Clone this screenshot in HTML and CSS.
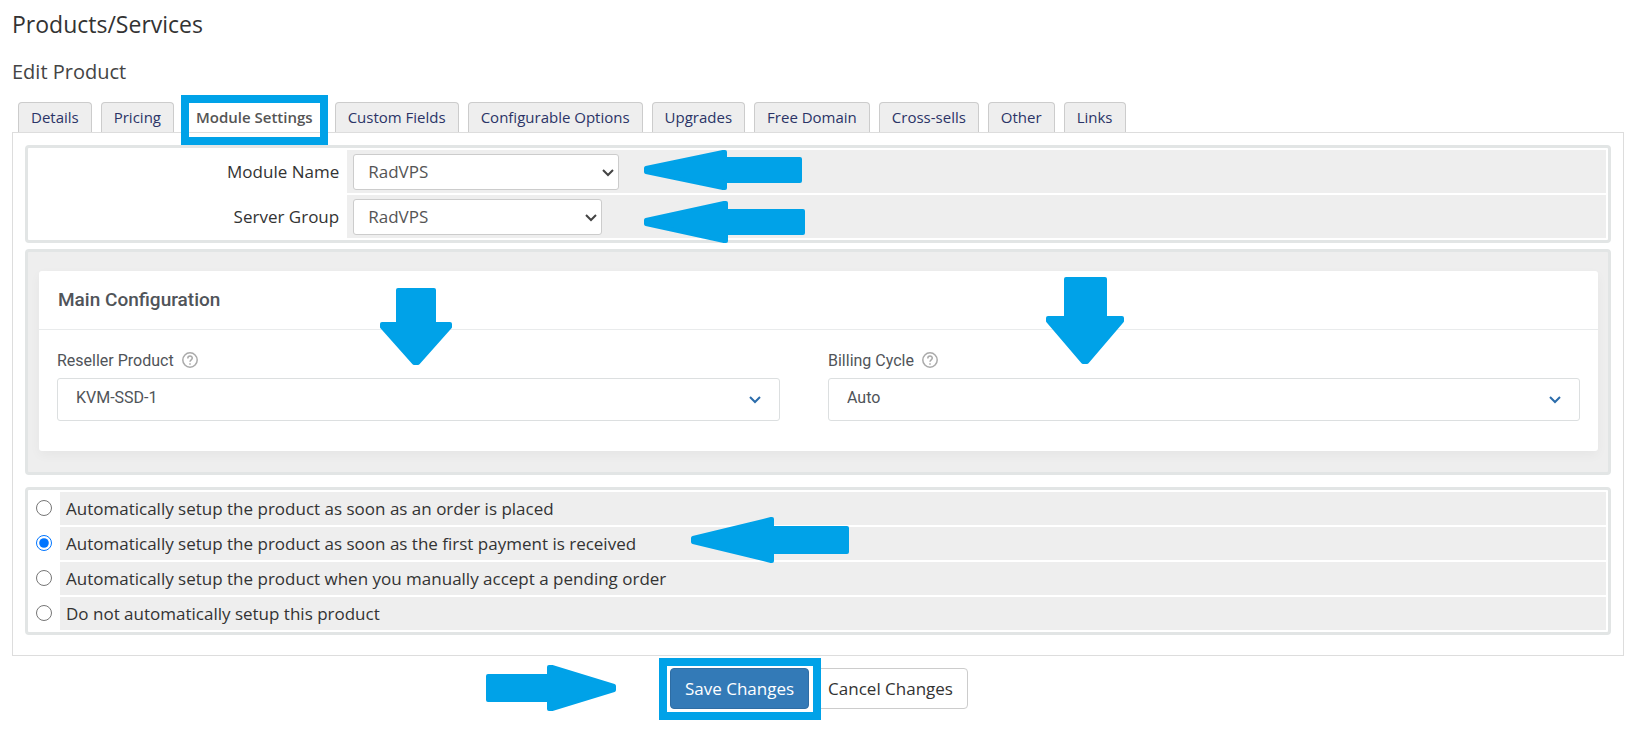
FILE: index.html
```html
<!DOCTYPE html>
<html lang="en">
<head>
  <meta charset="UTF-8">
  <meta name="viewport" content="width=device-width, initial-scale=1.0">
  <title>Products/Services - Edit Product</title>
  <link rel="stylesheet" href="styles.css">
</head>
<body>
  <h1>Products/Services</h1>
  <h2>Edit Product</h2>

  <form class="product-form">
    <nav class="tabs">
      <a href="#details">Details</a>
      <a href="#pricing">Pricing</a>
      <a href="#module" class="active">Module Settings<span class="frame"></span></a>
      <a href="#custom">Custom Fields</a>
      <a href="#options">Configurable Options</a>
      <a href="#upgrades">Upgrades</a>
      <a href="#domain">Free Domain</a>
      <a href="#cross">Cross-sells</a>
      <a href="#other">Other</a>
      <a href="#links">Links</a>
    </nav>

    <div class="tab-content">
      <section class="box module-box">
        <div class="row">
          <label for="moduleName">Module Name</label>
          <div class="field">
            <span class="select module-select">
              <select id="moduleName"><option>RadVPS</option></select>
              <svg width="12" height="8" viewBox="0 0 12 8"><path d="M1 1l5 5 5-5"/></svg>
            </span>
          </div>
        </div>
        <div class="row">
          <label for="serverGroup">Server Group</label>
          <div class="field">
            <span class="select group-select">
              <select id="serverGroup"><option>RadVPS</option></select>
              <svg width="12" height="8" viewBox="0 0 12 8"><path d="M1 1l5 5 5-5"/></svg>
            </span>
          </div>
        </div>
        <svg class="arrow arrow-name" width="158" height="40" viewBox="0 0 158 40"><path d="M2 18L79 2H81V9H156V31H81V38H79L2 22Z"/></svg>
        <svg class="arrow arrow-group" width="161" height="42" viewBox="0 0 161 42"><path d="M2 19L80 2H82V10H159V32H82V40H80L2 23Z"/></svg>
      </section>

      <section class="box config-box">
        <div class="card">
          <h3>Main Configuration</h3>
          <div class="card-body">
            <div class="config">
              <div class="config-label">
                <label for="resellerProduct">Reseller Product</label>
                <svg class="help" width="16" height="16" viewBox="0 0 16 16"><circle cx="8" cy="8" r="7.2"/><path d="M5.8 6.4C5.8 3.3 10.3 3.4 10.3 6.1C10.3 7.8 8 7.9 8 9.7M8 11.2V12.7"/></svg>
              </div>
              <span class="select config-select">
                <select id="resellerProduct"><option>KVM-SSD-1</option></select>
                <svg width="12" height="8" viewBox="0 0 12 8"><path d="M1 1l5 5 5-5"/></svg>
              </span>
            </div>
            <div class="config">
              <div class="config-label">
                <label for="billingCycle">Billing Cycle</label>
                <svg class="help" width="16" height="16" viewBox="0 0 16 16"><circle cx="8" cy="8" r="7.2"/><path d="M5.8 6.4C5.8 3.3 10.3 3.4 10.3 6.1C10.3 7.8 8 7.9 8 9.7M8 11.2V12.7"/></svg>
              </div>
              <span class="select config-select">
                <select id="billingCycle"><option>Auto</option></select>
                <svg width="12" height="8" viewBox="0 0 12 8"><path d="M1 1l5 5 5-5"/></svg>
              </span>
            </div>
          </div>
        </div>
        <svg class="arrow arrow-reseller" width="72" height="77" viewBox="0 0 72 77"><path d="M18 2H54V36H70V39L38 75H34L2 39V36H18Z"/></svg>
        <svg class="arrow arrow-billing" width="78" height="87" viewBox="0 0 78 87"><path d="M20 2H59V41H76V44L41 85H37L2 44V41H20Z"/></svg>
      </section>

      <section class="box setup-box">
        <div class="option">
          <input type="radio" name="autosetup" id="setupOrder">
          <label for="setupOrder">Automatically setup the product as soon as an order is placed</label>
        </div>
        <div class="option">
          <input type="radio" name="autosetup" id="setupPayment" checked>
          <label for="setupPayment">Automatically setup the product as soon as the first payment is received</label>
        </div>
        <div class="option">
          <input type="radio" name="autosetup" id="setupManual">
          <label for="setupManual">Automatically setup the product when you manually accept a pending order</label>
        </div>
        <div class="option">
          <input type="radio" name="autosetup" id="setupOff">
          <label for="setupOff">Do not automatically setup this product</label>
        </div>
        <svg class="arrow arrow-setup" width="158" height="46" viewBox="0 0 158 46"><path d="M2 21L80 2H81V11H156V35H81V44H80L2 25Z"/></svg>
      </section>
    </div>

    <div class="buttons">
      <svg class="arrow-save" width="130" height="46" viewBox="0 0 130 46"><path d="M2 11H63V2H66L128 21V25L66 44H63V35H2Z"/></svg>
      <button type="submit" class="btn btn-primary">Save Changes<span class="frame"></span></button>
      <button type="reset" class="btn">Cancel Changes</button>
    </div>
  </form>
</body>
</html>
```
FILE: styles.css
```css
* {
  box-sizing: border-box;
}

body {
  margin: 0;
  padding: 8px 14px 18px 12px;
  font-family: "Open Sans", sans-serif;
  font-size: 17px;
  color: #333;
  background-color: #fff;
}

h1 {
  margin: 0 0 16px;
  font-size: 23px;
  font-weight: 400;
  line-height: 32px;
}

h2 {
  margin: 0 0 14px;
  font-size: 20px;
  font-weight: 400;
  line-height: 32px;
  color: #444;
}

/* tabs */
.tabs {
  display: flex;
  gap: 9px;
  padding-left: 6px;
}

.tabs a {
  position: relative;
  height: 30px;
  padding: 0 12px;
  border: 1px solid #ccc;
  border-bottom: 0;
  border-radius: 4px 4px 0 0;
  background-color: #eee;
  color: #2b3467;
  font-size: 15px;
  line-height: 29px;
  text-decoration: none;
  white-space: nowrap;
}

.tabs .active {
  border-color: #fff;
  background-color: #fff;
  color: #555;
  font-weight: 600;
}

.frame {
  position: absolute;
  border: 8px solid #00a2e8;
  pointer-events: none;
}

.tabs .frame {
  inset: -8px -3px -13px;
}

.tab-content {
  padding: 12px 12px 20px;
  border: 1px solid #ddd;
}

/* boxes */
.box {
  position: relative;
  padding: 2px;
  border: 3px solid #e2e5e5;
  border-radius: 4px;
}

.module-box,
.setup-box {
  display: flex;
  flex-direction: column;
  gap: 2px;
}

.row {
  display: grid;
  grid-template-columns: 20% 1fr;
  gap: 2px;
}

.row label {
  padding-right: 6px;
  line-height: 43px;
  text-align: right;
}

.field {
  display: flex;
  align-items: center;
  height: 43px;
  padding: 0 6px;
  background-color: #eee;
}

.select {
  position: relative;
  display: block;
}

.select select {
  width: 100%;
  height: 36px;
  padding: 0 14px;
  border: 1px solid #ccc;
  border-radius: 3px;
  background-color: #fff;
  color: #555;
  font-family: inherit;
  font-size: 17px;
  appearance: none;
}

.select svg {
  position: absolute;
  top: 50%;
  right: 5px;
  margin-top: -3px;
  fill: none;
  stroke: #444;
  stroke-width: 2;
  pointer-events: none;
}

.module-select {
  width: 266px;
}

.group-select {
  width: 249px;
}

/* main configuration */
.config-box {
  margin: 6px 0 12px;
  padding: 19px 10px 21px 11px;
  background-color: #eee;
}

.card {
  border-radius: 3px;
  background-color: #fff;
  box-shadow: 0 4px 12px rgba(0, 0, 0, 0.04);
  font-family: Roboto, sans-serif;
  color: #505459;
}

.card h3 {
  margin: 0;
  padding: 0 19px;
  border-bottom: 1px solid #e9ebec;
  font-size: 19px;
  font-weight: 500;
  line-height: 58px;
}

.card-body {
  display: grid;
  grid-template-columns: 723fr 752fr;
  gap: 48px;
  padding: 18px 18px 30px;
}

.config-label {
  display: flex;
  align-items: center;
  gap: 8px;
  height: 24px;
  margin-bottom: 6px;
  font-size: 16px;
}

.help {
  fill: none;
  stroke: #aaa;
  stroke-width: 1.5;
}

.config-select select {
  display: block;
  height: 43px;
  padding: 0 18px 4px;
  border-color: #dcdfe0;
  color: #505459;
  font-size: 16px;
}

.config-select svg {
  right: 19px;
  margin-top: -4px;
  stroke: #2b6cab;
}

/* automatic setup */
.option {
  display: grid;
  grid-template-columns: 28px 1fr;
  gap: 2px;
}

.option input {
  width: 16px;
  height: 16px;
  margin: 8px 6px;
}

.option label {
  padding-left: 6px;
  background-color: #eee;
  line-height: 33px;
}

/* arrows */
.arrow,
.arrow-save {
  fill: #00a2e8;
  stroke: #00a2e8;
  stroke-width: 4;
  stroke-linejoin: round;
}

.arrow {
  position: absolute;
  pointer-events: none;
}

.arrow-name {
  top: 2px;
  left: 616px;
}

.arrow-group {
  top: 53px;
  left: 616px;
}

.arrow-reseller {
  top: 36px;
  left: 352px;
}

.arrow-billing {
  top: 25px;
  left: 1018px;
}

.arrow-setup {
  top: 27px;
  left: 663px;
}

/* buttons */
.buttons {
  display: flex;
  justify-content: center;
  align-items: center;
  gap: 4px;
  margin-top: 9px;
  padding-right: 182px;
}

.arrow-save {
  margin-right: 50px;
}

.btn {
  position: relative;
  height: 41px;
  padding: 0 14px;
  border: 1px solid #ccc;
  border-radius: 4px;
  background-color: #fff;
  color: #333;
  font-family: inherit;
  font-size: 17px;
}

.btn-primary {
  z-index: 1;
  border-color: #2e6da4;
  background-color: #337ab7;
  color: #fff;
}

.btn .frame {
  inset: -11px -13px -12px -12px;
}
```
